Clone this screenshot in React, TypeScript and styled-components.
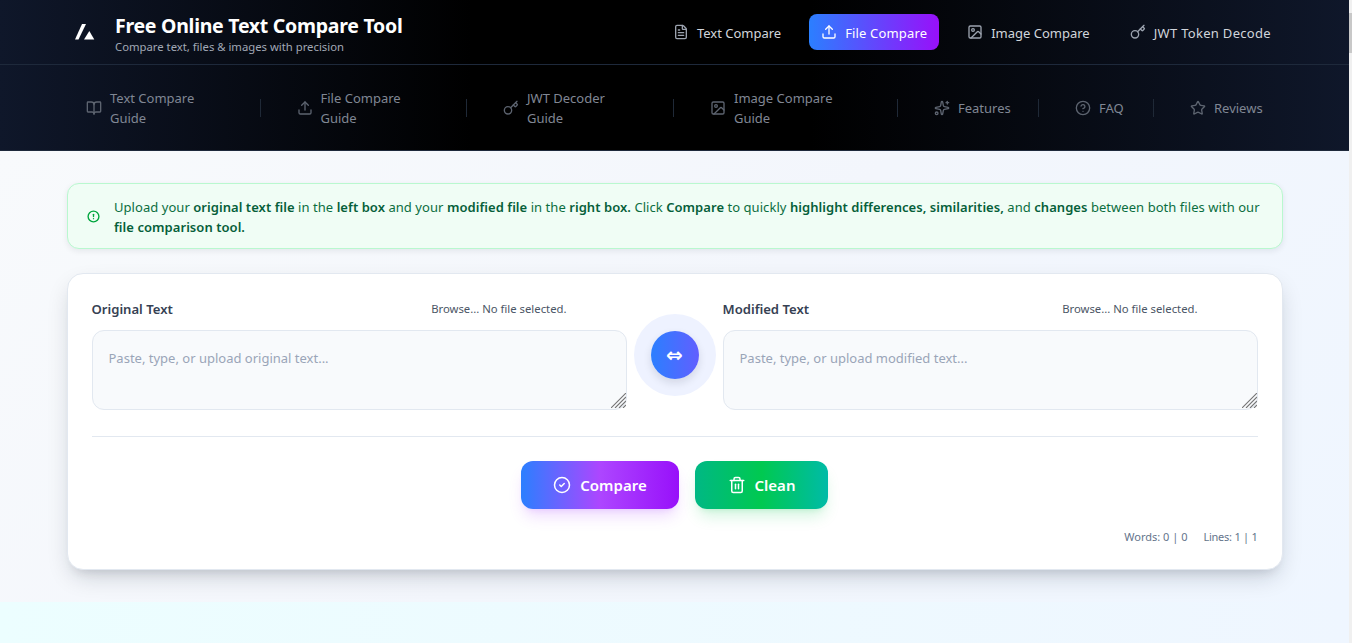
import React from "react";
import styled, { createGlobalStyle } from "styled-components";
import {
  FileText, Upload, Image as ImageIcon, Key, BookOpen, Sparkles, CircleHelp, Star,
  CircleAlert, CircleCheck, Trash2,
} from "lucide-react";

const Global = createGlobalStyle`
  body { margin: 0; font-family: "Noto Sans", "Open Sans", sans-serif; background: #f5f7fc; }
  * { box-sizing: border-box; }
`;

const Page = styled.div`
  margin-right: 3px;
`;
const ScrollTrack = styled.div`
  position: fixed;
  top: 0;
  right: 0;
  bottom: 0;
  width: 3px;
  padding-top: 13px;
  background: #f0f0f0;
`;
const ScrollThumb = styled.div`
  height: 40px;
  background: #c8c8c8;
`;

const Header = styled.header`
  background: linear-gradient(90deg, #0f172a 0%, #000 35%, #000 60%, #0f172a 100%);
  color: #fff;
`;
const TopBar = styled.div`
  height: 65px;
  padding: 0 66px 0 67px;
  display: flex;
  align-items: center;
  justify-content: space-between;
  border-bottom: 1px solid #1e293b;
`;
const Brand = styled.div`
  display: flex;
  align-items: center;
  gap: 19px;
  padding-left: 7px;
`;
const BrandText = styled.div`
  display: flex;
  flex-direction: column;
  padding-top: 4px;
`;
const Title = styled.h1`
  margin: 0;
  font-size: 19.5px;
  line-height: 26px;
  font-weight: 700;
  color: #fff;
  letter-spacing: -0.27px;
`;
const Subtitle = styled.p`
  margin: 0;
  font-size: 11.3px;
  line-height: 16px;
  color: #a1a8b5;
`;
const MainNav = styled.nav`
  display: flex;
  align-items: center;
  gap: 16px;
`;
const MainLink = styled.a<{ $active?: boolean }>`
  height: 36px;
  padding: 0 12px;
  display: flex;
  align-items: center;
  gap: 8px;
  border-radius: 8px;
  font-size: 13px;
  color: ${(p) => (p.$active ? "#fff" : "#d1d5db")};
  background: ${(p) => (p.$active ? "linear-gradient(90deg, #2b7fff, #9810fa)" : "transparent")};
  svg { color: ${(p) => (p.$active ? "#fff" : "#9ca3af")}; }
`;
const MainLabel = styled.span<{ $track?: number }>`
  margin-top: 2px;
  letter-spacing: ${(p) => p.$track ?? 0}px;
`;
const SubNav = styled.nav`
  height: 86px;
  padding: 0 0 0 67px;
  display: flex;
  align-items: center;
  border-bottom: 1px solid #1e293b;
`;
const SubLink = styled.a<{ $w: number; $pad: number; $last?: boolean }>`
  width: ${(p) => p.$w}px;
  height: 18px;
  padding-left: ${(p) => p.$pad}px;
  display: flex;
  align-items: center;
  gap: 8px;
  font-size: 13px;
  line-height: 20px;
  color: #808794;
  border-right: ${(p) => (p.$last ? "none" : "1px solid #1f2937")};
  svg { flex: none; color: #5d6470; }
`;
const SubLabel = styled.span<{ $w?: number }>`
  flex: none;
  width: ${(p) => (p.$w ? `${p.$w}px` : "auto")};
  white-space: ${(p) => (p.$w ? "normal" : "nowrap")};
`;

const Main = styled.main`
  height: 451px;
  padding: 32px 66.5px 0;
  background: linear-gradient(135deg, #f8fafc, #f3f6fc 50%, #eff6ff);
`;
const Notice = styled.div`
  height: 66px;
  display: flex;
  align-items: center;
  gap: 14px;
  padding: 0 20px 0 19.5px;
  background: #f0fdf5;
  border: 1px solid #b9f8cf;
  border-radius: 12px;
  box-shadow: 0 2px 6px rgba(15, 23, 42, 0.08);
  font-size: 13px;
  line-height: 20px;
  letter-spacing: 0.05px;
  color: #0b6e3f;
  svg { flex: none; color: #00a63e; }
  strong { font-weight: 600; color: #065f3a; }
`;
const NoticeText = styled.span`
  padding-top: 2px;
`;
const Card = styled.section`
  margin-top: 24px;
  height: 297px;
  padding: 24px 24px 0;
  background: #fff;
  border: 1px solid #e2e8f0;
  border-radius: 16px;
  box-shadow: 0 10px 25px -5px rgba(15, 23, 42, 0.2), 0 8px 10px -6px rgba(15, 23, 42, 0.1);
`;
const Editors = styled.div`
  display: grid;
  grid-template-columns: 535px 96px 535px;
  height: 139px;
  border-bottom: 1px solid #e2e8f0;
`;
const Editor = styled.div`
  display: flex;
  flex-direction: column;
`;
const EditorHead = styled.div`
  height: 32px;
  padding: 0 60px 10px 0;
  display: flex;
  align-items: center;
  justify-content: space-between;
`;
const EditorLabel = styled.label`
  font-size: 13.1px;
  font-weight: 600;
  color: #364153;
`;
const FilePick = styled.span`
  margin-bottom: 2px;
  font-size: 11.3px;
  color: #4a5565;
`;
const BoxFrame = styled.div`
  position: relative;
  height: 80px;
`;
const TextBox = styled.textarea`
  display: block;
  width: 100%;
  height: 100%;
  padding: 17px 16px 0;
  border: 1px solid #e2e8f0;
  border-radius: 12px;
  background: #f8fafc;
  font-family: inherit;
  font-size: 13px;
  line-height: 20px;
  color: #1f2937;
  outline: none;
  resize: none;
  &::placeholder { color: #9aa5b8; opacity: 1; }
`;
const Grip = styled.svg`
  position: absolute;
  right: 1px;
  bottom: 2px;
  width: 15px;
  height: 15px;
  stroke: #757575;
  stroke-width: 1.1;
  pointer-events: none;
`;
const SwapCell = styled.div`
  display: flex;
  justify-content: center;
  padding-top: 16px;
`;
const SwapHalo = styled.div`
  width: 82px;
  height: 82px;
  border-radius: 50%;
  background: #eef2ff;
  display: flex;
  align-items: center;
  justify-content: center;
`;
const SwapButton = styled.button`
  width: 48px;
  height: 48px;
  padding: 0;
  border: none;
  border-radius: 50%;
  color: #fff;
  font-family: "DejaVu Sans", sans-serif;
  font-size: 20px;
  line-height: 48px;
  font-weight: 700;
  background: linear-gradient(90deg, #2b7fff, #615fff);
  box-shadow: 0 4px 8px rgba(15, 23, 42, 0.12);
`;
const Actions = styled.div`
  display: flex;
  justify-content: center;
  gap: 16px;
  margin-top: 24px;
`;
const ActionButton = styled.button<{ $w: number; $bg: string; $glow: string }>`
  width: ${(p) => p.$w}px;
  height: 48px;
  border: none;
  border-radius: 12px;
  display: flex;
  align-items: center;
  justify-content: center;
  gap: 9px;
  color: #fff;
  font-family: inherit;
  font-size: 15px;
  font-weight: 600;
  background: ${(p) => p.$bg};
  box-shadow: 0 10px 15px -3px ${(p) => p.$glow}, 0 4px 6px -4px ${(p) => p.$glow};
`;
const Stats = styled.div`
  margin-top: 20px;
  display: flex;
  justify-content: flex-end;
  gap: 16px;
  font-size: 11px;
  line-height: 16px;
  color: #64748b;
`;
const StatValue = styled.span<{ $track?: number }>`
  letter-spacing: ${(p) => p.$track ?? 0}px;
`;
const NextSection = styled.section`
  height: 400px;
  background: linear-gradient(90deg, #ecfeff, #eff6ff);
`;

const subItems = [
  { w: 194, pad: 19, icon: BookOpen, label: "Text Compare Guide", lw: 100 },
  { w: 206, pad: 35.5, icon: Upload, label: "File Compare Guide", lw: 100 },
  { w: 207, pad: 36, icon: Key, label: "JWT Decoder Guide", lw: 100 },
  { w: 224, pad: 36, icon: ImageIcon, label: "Image Compare Guide", lw: 120 },
  { w: 141, pad: 36, icon: Sparkles, label: "Features" },
  { w: 115, pad: 36, icon: CircleHelp, label: "FAQ" },
  { w: 130, pad: 36, icon: Star, label: "Reviews", last: true },
];

const ResizeGrip = () => (
  <Grip viewBox="0 0 15 15" aria-hidden="true">
    <path d="M15 0 L0 15 M15 4 L4 15 M15 8 L8 15 M15 12 L12 15" />
  </Grip>
);

export default function App() {
  return (
    <Page>
      <Global />
      <Header>
        <TopBar>
          <Brand>
            <svg width="22" height="18" viewBox="0 0 22 18" aria-hidden="true">
              <path d="M8 1 H12 L4.5 16.5 H1 Z" fill="#fff" />
              <path d="M15.3 8 L20.3 16.5 H10 Z" fill="#fff" />
            </svg>
            <BrandText>
              <Title>Free Online Text Compare Tool</Title>
              <Subtitle>Compare text, files &amp; images with precision</Subtitle>
            </BrandText>
          </Brand>
          <MainNav>
            <MainLink><FileText size={16} /><MainLabel>Text Compare</MainLabel></MainLink>
            <MainLink $active><Upload size={16} /><MainLabel $track={0.15}>File Compare</MainLabel></MainLink>
            <MainLink><ImageIcon size={16} /><MainLabel>Image Compare</MainLabel></MainLink>
            <MainLink><Key size={16} /><MainLabel $track={0.31}>JWT Token Decode</MainLabel></MainLink>
          </MainNav>
        </TopBar>
        <SubNav>
          {subItems.map((s) => (
            <SubLink key={s.label} $w={s.w} $pad={s.pad} $last={s.last}>
              <s.icon size={16} />
              <SubLabel $w={s.lw}>{s.label}</SubLabel>
            </SubLink>
          ))}
        </SubNav>
      </Header>
      <Main>
        <Notice>
          <CircleAlert size={13} strokeWidth={2.5} />
          <NoticeText>
            Upload your <strong>original text file</strong> in the <strong>left box</strong> and your{" "}
            <strong>modified file</strong> in the <strong>right box.</strong> Click <strong>Compare</strong> to quickly{" "}
            <strong>highlight differences, similarities,</strong> and <strong>changes</strong> between both files with our{" "}
            <strong>file comparison tool.</strong>
          </NoticeText>
        </Notice>
        <Card>
          <Editors>
            <Editor>
              <EditorHead>
                <EditorLabel>Original Text</EditorLabel>
                <FilePick>Browse... No file selected.</FilePick>
              </EditorHead>
              <BoxFrame>
                <TextBox placeholder="Paste, type, or upload original text..." />
                <ResizeGrip />
              </BoxFrame>
            </Editor>
            <SwapCell>
              <SwapHalo>
                <SwapButton>⇔</SwapButton>
              </SwapHalo>
            </SwapCell>
            <Editor>
              <EditorHead>
                <EditorLabel>Modified Text</EditorLabel>
                <FilePick>Browse... No file selected.</FilePick>
              </EditorHead>
              <BoxFrame>
                <TextBox placeholder="Paste, type, or upload modified text..." />
                <ResizeGrip />
              </BoxFrame>
            </Editor>
          </Editors>
          <Actions>
            <ActionButton $w={158} $bg="linear-gradient(90deg, #2b7fff, #ad46ff 50%, #9810fa)" $glow="rgba(173,70,255,0.2)">
              <CircleCheck size={18} />Compare
            </ActionButton>
            <ActionButton $w={133} $bg="linear-gradient(90deg, #00b884, #00c950 50%, #00bba7)" $glow="rgba(0,201,80,0.18)">
              <Trash2 size={18} />Clean
            </ActionButton>
          </Actions>
          <Stats>
            <StatValue>Words: 0 | 0</StatValue>
            <StatValue $track={-0.25}>Lines: 1 | 1</StatValue>
          </Stats>
        </Card>
      </Main>
      <NextSection />
      <ScrollTrack>
        <ScrollThumb />
      </ScrollTrack>
    </Page>
  );
}
